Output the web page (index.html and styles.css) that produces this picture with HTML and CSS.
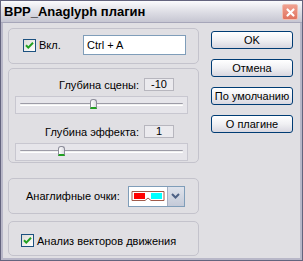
FILE: index.html
```html
<!DOCTYPE html>
<html lang="ru">
<head>
  <meta charset="UTF-8" />
  <title>BPP_Anaglyph плагин</title>
  <link rel="stylesheet" href="styles.css">
</head>
<body>
  <div class="window">
    <div class="titlebar">
      <span class="title">BPP_Anaglyph плагин</span>
      <span class="close">
        <svg width="13" height="13" viewBox="0 0 13 13"><path d="M3.5 3.5 L9.5 9.5 M9.5 3.5 L3.5 9.5" stroke="#fff" stroke-width="2.2" stroke-linecap="round"/></svg>
      </span>
    </div>

    <div class="content">
      <div class="left">
        <div class="group g-enable">
          <span class="check">
            <span class="box"><svg width="11" height="11" viewBox="0 0 11 11"><path d="M2 5.2 L4.3 7.6 L9 2.8" fill="none" stroke="#21a121" stroke-width="2"/></svg></span>
            Вкл.
          </span>
          <div class="edit">Ctrl + A</div>
        </div>

        <div class="group g-depth">
          <div class="param">
            <span>Глубина сцены:</span>
            <span class="value">-10</span>
          </div>
          <div class="slider">
            <div class="channel"></div>
            <span class="thumb" style="left: 74px"></span>
          </div>
          <div class="param">
            <span>Глубина эффекта:</span>
            <span class="value">1</span>
          </div>
          <div class="slider">
            <div class="channel"></div>
            <span class="thumb" style="left: 42px"></span>
          </div>
        </div>

        <div class="group g-glasses">
          <span>Анаглифные очки:</span>
          <div class="combo">
            <div class="combo-value">
              <svg width="34" height="12" viewBox="0 0 34 12">
                <path d="M1 1.5 H33 V10.5 H20 L17 8 L14 10.5 H1 Z" fill="#fff" stroke="#a05a4a" stroke-width="1"/>
                <rect x="3" y="3" width="11" height="6" fill="#f00"/>
                <rect x="20" y="3" width="11" height="6" fill="#0ff"/>
              </svg>
            </div>
            <div class="combo-btn">
              <svg width="9" height="6" viewBox="0 0 9 6"><path d="M1 1 L4.5 4.5 L8 1" fill="none" stroke="#4d6185" stroke-width="2"/></svg>
            </div>
          </div>
        </div>

        <div class="group g-motion">
          <span class="check">
            <span class="box"><svg width="11" height="11" viewBox="0 0 11 11"><path d="M2 5.2 L4.3 7.6 L9 2.8" fill="none" stroke="#21a121" stroke-width="2"/></svg></span>
            Анализ векторов движения
          </span>
        </div>
      </div>

      <div class="buttons">
        <button>OK</button>
        <button>Отмена</button>
        <button>По умолчанию</button>
        <button>О плагине</button>
      </div>
    </div>
  </div>
</body>
</html>
```

FILE: styles.css
```css
body {
  margin: 0;
  font-family: Tahoma, "Liberation Sans", Arial, sans-serif;
  font-size: 11px;
  color: #000;
  background: #e0dfe3;
}
.window {
  width: 303px;
  height: 261px;
  box-sizing: border-box;
  border: 1px solid #64647e;
  box-shadow: inset 0 0 0 2px #b8b7c8;
  background: #e0dfe3;
}
.titlebar {
  height: 21px;
  display: flex;
  align-items: center;
  justify-content: space-between;
  padding: 0 4px 0 3px;
  background: linear-gradient(#fbfbfd, #e4e4ea 40%, #c6c6d2);
  border-bottom: 1px solid #a6a6b9;
}
.title {
  font-family: "Liberation Sans", Arial, sans-serif;
  font-weight: bold;
  font-size: 13px;
}
.close {
  width: 14px;
  height: 14px;
  border-radius: 2px;
  background: linear-gradient(#f0a090, #e0735f);
  border: 1px solid #f0beb2;
  display: flex;
  align-items: center;
  justify-content: center;
  margin-top: 1px;
}
.content {
  display: flex;
  gap: 12px;
  padding: 5px 0 0 7px;
}
.left {
  width: 191px;
  display: flex;
  flex-direction: column;
}
.group {
  box-sizing: border-box;
  border: 1px solid #c4c3cc;
  border-radius: 5px;
}
.g-enable {
  height: 36px;
  display: flex;
  align-items: center;
  padding: 0 0 2px 14px;
}
.g-depth {
  height: 95px;
  margin-top: 4px;
  padding: 9px 10px 0 6px;
}
.g-glasses {
  height: 36px;
  margin-top: 15px;
  display: flex;
  align-items: center;
  padding-left: 17px;
  gap: 8px;
}
.g-motion {
  height: 35px;
  margin-top: 7px;
  display: flex;
  align-items: center;
  padding: 4px 0 0 12px;
}
.check {
  display: flex;
  align-items: center;
  gap: 3px;
}
.box {
  width: 11px;
  height: 11px;
  border: 1px solid #1c5180;
  background: linear-gradient(135deg, #dcdcd7, #fff);
  display: flex;
}
.g-enable .check {
  width: 60px;
}
.edit {
  width: 103px;
  height: 20px;
  box-sizing: border-box;
  border: 1px solid #7f9db9;
  background: #fff;
  padding: 3px 0 0 3px;
}
.param {
  display: flex;
  justify-content: flex-end;
  align-items: center;
  gap: 5px;
  padding-right: 14px;
}
.value {
  width: 30px;
  height: 13px;
  box-sizing: border-box;
  border: 1px solid #b7b6be;
  background: #ebeaee;
  text-align: center;
  line-height: 11px;
}
.param + .slider {
  margin-top: 5px;
}
.slider + .param {
  margin-top: 11px;
}
.slider {
  position: relative;
  height: 18px;
  box-sizing: border-box;
  border: 1px solid #c8c7d0;
  background: #e6e5ea;
  padding: 6px 4px 0;
}
.channel {
  height: 3px;
  box-sizing: border-box;
  border-top: 1px solid #9d9ca7;
  border-bottom: 1px solid #fff;
  background: #f0f0f0;
  border-radius: 1px;
}
.thumb {
  position: absolute;
  top: 2px;
  width: 7px;
  height: 10px;
  box-sizing: border-box;
  border: 1px solid #8d8d9a;
  border-bottom: 2px solid #21a121;
  border-radius: 3px 3px 0 0;
  background: linear-gradient(90deg, #fff, #dcdce2);
}
.combo {
  display: flex;
  width: 57px;
  height: 21px;
  box-sizing: border-box;
  border: 1px solid #7f9db9;
  background: #fff;
}
.combo-value {
  flex: 1;
  display: flex;
  align-items: center;
  padding-left: 2px;
}
.combo-btn {
  width: 16px;
  background: linear-gradient(#dfe3ec, #c4cad8);
  border-left: 1px solid #a6afc2;
  display: flex;
  align-items: center;
  justify-content: center;
}
.buttons {
  display: flex;
  flex-direction: column;
  gap: 10px;
  padding-top: 3px;
}
button {
  width: 82px;
  height: 18px;
  padding: 0;
  font: inherit;
  font-size: 11px;
  color: #000;
  border: 1px solid #003c74;
  border-radius: 3px;
  background: linear-gradient(#ffffff, #f0f0f3 50%, #d8d7e0);
}
```
